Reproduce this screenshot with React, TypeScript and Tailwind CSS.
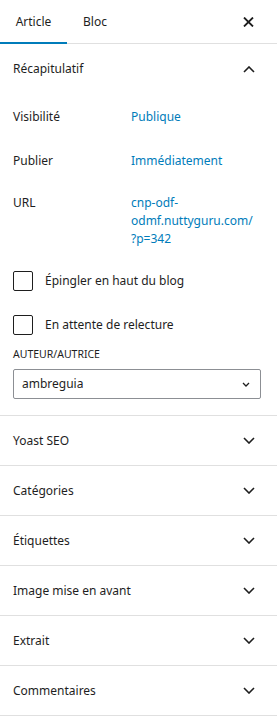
const panels = ["Yoast SEO", "Catégories", "Étiquettes", "Image mise en avant", "Extrait", "Commentaires"];

function Chevron({ up = false, small = false }: { up?: boolean; small?: boolean }) {
  const w = small ? 8 : 12;
  return (
    <svg width={w} height={small ? 5 : 7} viewBox={small ? "0 0 8 5" : "0 0 12 7"} fill="none" stroke="#1e1e1e" strokeWidth={small ? 1.3 : 1.6}>
      {small ? (
        <path d="M1 1 L4 4 L7 1" />
      ) : up ? (
        <path d="M1 6 L6 1 L11 6" />
      ) : (
        <path d="M1 1 L6 6 L11 1" />
      )}
    </svg>
  );
}

function Row({ label, children }: { label: string; children: React.ReactNode }) {
  return (
    <div className="flex items-start">
      <div className="w-[118px] shrink-0">{label}</div>
      <div className="text-[#007cba]">{children}</div>
    </div>
  );
}

function Check({ label }: { label: string }) {
  return (
    <label className="flex items-center gap-[12px]">
      <span className="block h-[20px] w-[20px] rounded-[2px] border border-[#1e1e1e] bg-white" />
      <span>{label}</span>
    </label>
  );
}

export default function App() {
  return (
    <div
      className="h-[727px] w-[277px] overflow-hidden bg-white text-[12px] leading-[18px] text-[#1e1e1e]"
      style={{ fontFamily: '"Noto Sans", "Open Sans", sans-serif' }}
    >
      <div className="flex h-[44px] items-stretch border-b border-[#e0e0e0]">
        <div className="relative flex w-[67px] items-center justify-center">
          Article
          <span className="absolute bottom-[-1px] left-0 h-[2px] w-full bg-[#007cba]" />
        </div>
        <div className="flex w-[56px] items-center justify-center">Bloc</div>
        <div className="ml-auto flex w-[56px] items-center justify-center pr-[2px]">
          <svg width="11" height="10" viewBox="0 0 11 10" fill="none" stroke="#1e1e1e" strokeWidth="1.8">
            <path d="M1 0.5 L10 9.5 M10 0.5 L1 9.5" />
          </svg>
        </div>
      </div>

      <div className="border-b border-[#e0e0e0] px-[13px] pb-[16px]">
        <div className="flex h-[50px] items-center justify-between">
          <span>Récapitulatif</span>
          <span className="mr-[9px] flex">
            <Chevron up />
          </span>
        </div>
        <div className="pt-[14px]">
          <Row label="Visibilité">Publique</Row>
          <div className="mt-[26px]">
            <Row label="Publier">Immédiatement</Row>
          </div>
          <div className="mt-[24px]">
            <Row label="URL">
              cnp-odf-
              <br />
              odmf.nuttyguru.com/
              <br />
              ?p=342
            </Row>
          </div>
        </div>
        <div className="mt-[23px] flex flex-col gap-[24px]">
          <Check label="Épingler en haut du blog" />
          <Check label="En attente de relecture" />
        </div>
        <div className="mt-[11px] text-[10.5px] leading-[16px] uppercase">Auteur/Autrice</div>
        <div className="mt-[7px] flex h-[30px] w-[248px] items-center justify-between rounded-[2px] border border-[#8c8f94] pl-[8px] pr-[10px]">
          <span>ambreguia</span>
          <Chevron small />
        </div>
      </div>

      {panels.map((p) => (
        <div key={p} className="flex h-[50px] items-center justify-between border-b border-[#e0e0e0] px-[13px]">
          <span>{p}</span>
          <span className="mr-[9px] flex">
            <Chevron />
          </span>
        </div>
      ))}
    </div>
  );
}
